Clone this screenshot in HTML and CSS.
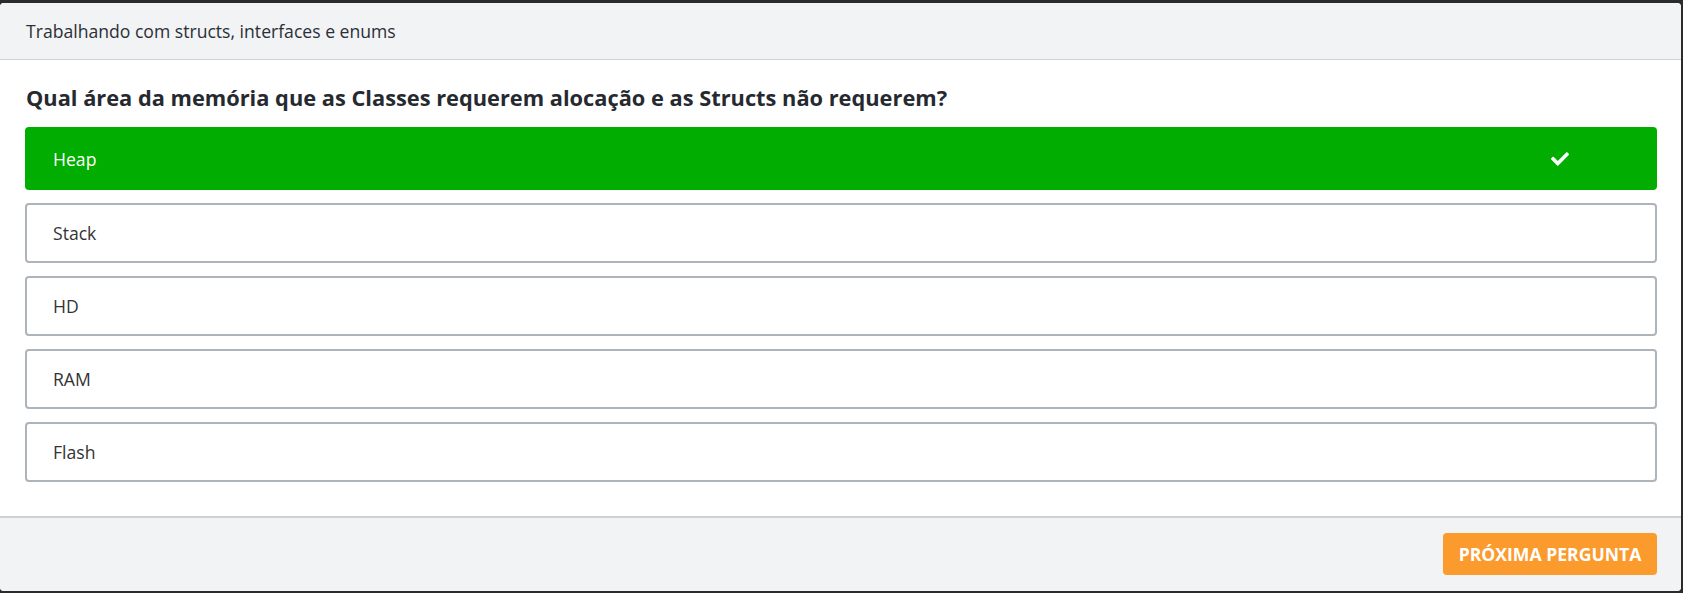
FILE: index.html
```html
<!DOCTYPE html>
<html lang="pt-BR">
<head>
<meta charset="utf-8">
<title>Quiz</title>
<link rel="stylesheet" href="styles.css">
</head>
<body>
<div class="modal">
  <div class="modal-header">Trabalhando com structs, interfaces e enums</div>
  <div class="modal-body">
    <h2 class="question">Qual área da memória que as Classes requerem alocação e as Structs não requerem?</h2>
    <div class="options">
      <div class="option correct">
        <span class="label">Heap</span>
        <svg class="check" viewBox="0 70 512 376" width="18" height="14"><path fill="#fff" d="M173.9 439.4l-166.4-166.4c-10-10-10-26.2 0-36.2l36.2-36.2c10-10 26.2-10 36.2 0L192 312.7 432.1 72.6c10-10 26.2-10 36.2 0l36.2 36.2c10 10 10 26.2 0 36.2L210.1 439.4c-10 10-26.2 10-36.2 0z"/></svg>
      </div>
      <div class="option"><span class="label">Stack</span></div>
      <div class="option"><span class="label">HD</span></div>
      <div class="option"><span class="label">RAM</span></div>
      <div class="option"><span class="label">Flash</span></div>
    </div>
  </div>
  <div class="modal-footer">
    <button class="btn-next">PRÓXIMA PERGUNTA</button>
  </div>
</div>
</body>
</html>
```
FILE: styles.css
```css
* { box-sizing: border-box; }
html, body { margin: 0; padding: 0; }
body {
  background: #2b2b2b;
  padding: 3px 2px 2px 0;
  font-family: "Open Sans", "Noto Sans", sans-serif;
  height: 593px;
}
.modal {
  background: #fff;
  border-radius: 4px;
  height: 588px;
  display: flex;
  flex-direction: column;
  overflow: hidden;
}
.modal-header {
  background: #f2f3f5;
  height: 57px;
  border-bottom: 1px solid #cfd2d6;
  padding: 0 26px;
  display: flex;
  align-items: center;
  font-size: 17.6px;
  color: #2a2f36;
}
.modal-body {
  padding: 24px 24px 32px 25px;
  flex: 1;
}
.question {
  margin: 0 0 15px 1px;
  font-size: 21.8px;
  line-height: 28px;
  font-weight: 700;
  color: #262a30;
}
.options {
  display: flex;
  flex-direction: column;
  gap: 13px;
}
.option {
  height: 60px;
  border: 2px solid #adb4bc;
  border-radius: 4px;
  display: flex;
  align-items: center;
  padding: 0 24px 0 26px;
  font-size: 17.6px;
  color: #333;
  background: #fff;
}
.option.correct {
  height: 63px;
  border: none;
  background: #00ad00;
  color: #fff;
  padding-left: 28px;
  justify-content: space-between;
  padding-right: 88px;
}
.check { display: block; }
.modal-footer {
  background: #f2f3f5;
  border-top: 2px solid #cdd0d4;
  height: 75px;
  display: flex;
  align-items: center;
  justify-content: flex-end;
  padding: 0 24px 0 0;
}
.btn-next {
  background: #fb9a2d;
  color: #fff;
  border: none;
  border-radius: 4px;
  height: 42px;
  width: 214px;
  font-family: "Open Sans", "Noto Sans", sans-serif;
  font-weight: 700;
  font-size: 17.6px;
  padding: 0;
  margin-top: -1px;
}
```
